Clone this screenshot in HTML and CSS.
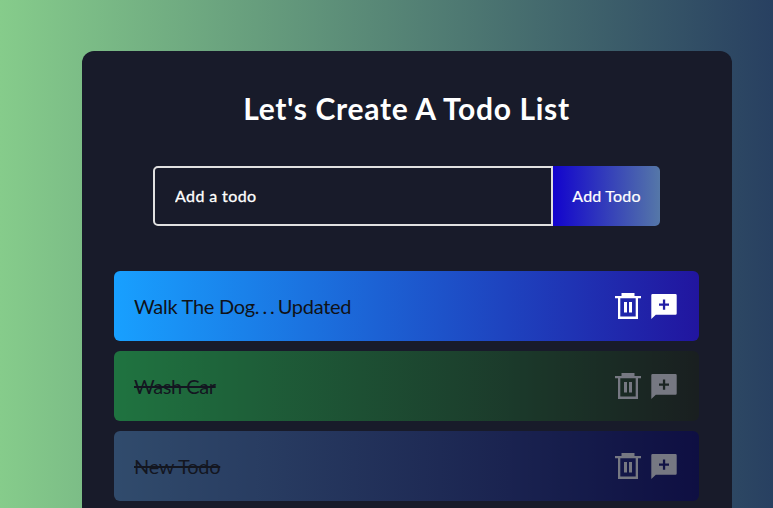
FILE: index.html
```html
<!DOCTYPE html>
<html lang="en">
<head>
<meta charset="utf-8">
<title>Todo List</title>
<link rel="stylesheet" href="styles.css">
</head>
<body>
<svg class="sprite" aria-hidden="true">
  <symbol id="trash" viewBox="0 0 26 26"><path fill-rule="evenodd" d="M6.500 0h13v3H26v2.300h-3V26H3V5.300H0V3h6.500zM5.300 5.300V23.500h15.400V5.300zM9 9h3v10.600H9zM14 9h3v10.600h-3z"/></symbol>
  <symbol id="note" viewBox="0 0 26 26"><path fill-rule="evenodd" d="M1.500 1h23a1.200 1.200 0 0 1 1.200 1.200v18.300a1.200 1.200 0 0 1-1.200 1.200H4.800L.3 26V2.200A1.200 1.200 0 0 1 1.500 1zM11.900 6.400v4H8v2.400h3.900v4h2.300v-4H18v-2.400h-3.800v-4z"/></symbol>
</svg>
<main class="app">
  <h1>Let's Create A Todo List</h1>
  <form class="todo-form">
    <input class="todo-input" type="text" placeholder="Add a todo">
    <button class="todo-button" type="button">Add Todo</button>
  </form>
  <div class="row blue"><span>Walk The Dog<span class="dots">...</span>Updated</span><div class="icons"><svg><use href="#trash"/></svg><svg><use href="#note"/></svg></div></div>
  <div class="row green complete"><span class="wash">Wash Car</span><div class="icons"><svg><use href="#trash"/></svg><svg><use href="#note"/></svg></div></div>
  <div class="row steel complete"><span>New Todo</span><div class="icons"><svg><use href="#trash"/></svg><svg><use href="#note"/></svg></div></div>
</main>
</body>
</html>
```
FILE: styles.css
```css
* { box-sizing: border-box; margin: 0; padding: 0; }
html { height: 100%; overflow: hidden; }
body {
  height: 508px;
  overflow: hidden;
  padding: 51px 41px 0 82px;
  background: linear-gradient(90deg, #86cc8b, #284061);
  font-family: "Trebuchet MS", Lato, sans-serif;
}
.sprite { display: none; }
.app {
  height: 457px;
  overflow: hidden;
  padding: 37px 33px 0 32px;
  border-radius: 12px 12px 0 0;
  background: #181b2a;
}
h1 {
  height: 40px;
  color: #fff;
  font-size: 30px;
  line-height: 40px;
  letter-spacing: .69px;
  text-align: center;
  white-space: nowrap;
}
.todo-form { display: flex; width: 507px; margin: 38px auto 45px 39px; }
.todo-input {
  width: 400px;
  height: 60px;
  padding: 0 20px 2px;
  border: 2px solid #e0e0e0;
  border-radius: 5px 0 0 5px;
  background: transparent;
  color: #fff;
  font: 16px "Trebuchet MS", Lato, sans-serif;
  letter-spacing: .4px;
  -webkit-text-stroke: .3px #fff;
}
.todo-input::placeholder { color: #fff; opacity: 1; }
.todo-button {
  width: 107px;
  height: 60px;
  padding-bottom: 2px;
  border: 0;
  border-radius: 0 5px 5px 0;
  background: linear-gradient(90deg, #1204cd, #5577a8);
  color: #fff;
  font: 16px "Trebuchet MS", Lato, sans-serif;
  letter-spacing: .2px;
  -webkit-text-stroke: .2px #fff;
}
.row {
  display: flex;
  align-items: center;
  justify-content: space-between;
  height: 70px;
  margin-bottom: 10px;
  padding: 0 22px 0 20px;
  border-radius: 6px;
  color: #101217;
  font-size: 20px;
  line-height: 24px;
  letter-spacing: -.28px;
}
.dots { letter-spacing: 2.900px; }
.wash { letter-spacing: -.42px; }
.blue { background: linear-gradient(90deg, #18a0ff, #21159f); }
.green { background: linear-gradient(90deg, #27cb57, #1b2317); }
.steel { background: linear-gradient(90deg, #4a7cae, #06045b); }
.complete { opacity: .5; text-decoration: line-through; }
.icons { display: flex; gap: 10px; color: #fff; }
.complete .icons { color: #d4d4da; }
.icons svg { width: 26px; height: 26px; fill: currentColor; }
```
